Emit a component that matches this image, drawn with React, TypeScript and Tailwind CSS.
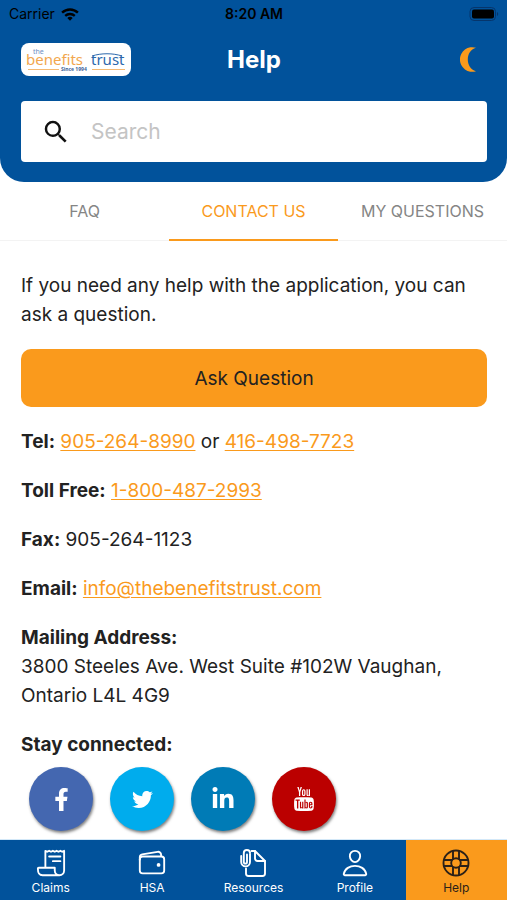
import type { ReactNode } from "react";
import { FaFacebookF, FaLinkedinIn, FaTwitter } from "react-icons/fa";
import { IoPersonOutline, IoReceiptOutline, IoWalletOutline } from "react-icons/io5";
import { MdSearch } from "react-icons/md";
import { TfiYoutube } from "react-icons/tfi";

function WifiIcon() {
  return (
    <svg viewBox="0 0 18 13" className="h-[13px] w-[18px]" aria-hidden="true">
      <path d="M9 12.8 6.3 10a4 4 0 0 1 5.4 0z" fill="currentColor" />
      <path d="M4.2 7.9a7 7 0 0 1 9.6 0" fill="none" stroke="currentColor" strokeWidth="2.3" />
      <path d="M1.1 4.7a11.3 11.3 0 0 1 15.8 0" fill="none" stroke="currentColor" strokeWidth="2.4" />
    </svg>
  );
}

function BatteryIcon() {
  return (
    <svg viewBox="0 0 30 14" className="h-[14px] w-[30px]" aria-hidden="true">
      <rect x="1" y="0.5" width="25.5" height="13" rx="4" fill="none" stroke="#06356b" />
      <rect x="3" y="2.5" width="22" height="9" rx="2" fill="#000" />
      <path d="M28 5c1.6.6 1.6 3.4 0 4z" fill="#06356b" />
    </svg>
  );
}

function MoonIcon() {
  return (
    <svg viewBox="0 0 16 25" className="h-[25px] w-4" fill="currentColor" aria-hidden="true">
      <path d="M16 0.800A12.300 12.300 0 1 0 16 24.200C10.500 22.500 7.800 17.800 7.800 12.500S10.500 2.500 16 0.800z" />
    </svg>
  );
}

function ResourcesIcon() {
  return (
    <svg
      viewBox="0 0 30 30"
      className="size-[30px]"
      fill="none"
      stroke="currentColor"
      strokeWidth="1.900"
      strokeLinecap="round"
      strokeLinejoin="round"
      aria-hidden="true"
    >
      <path d="M13.500 3H17l10 10v12.500a2.500 2.500 0 0 1-2.500 2.500H10.500A2.500 2.500 0 0 1 8 25.500v-5" />
      <path d="M17 3v7.500a2.500 2.500 0 0 0 2.500 2.500H27" />
      <path d="M12 6v8a4.400 4.400 0 0 1-8.800 0M3.200 14V8M5.800 12V5.100a3.100 3.100 0 0 1 6.200 0M5.800 12v2a1.600 1.600 0 0 0 3.200 0V6.500" />
    </svg>
  );
}

function LifebuoyIcon() {
  return (
    <svg viewBox="0 0 30 30" className="size-[30px]" fill="none" stroke="currentColor" strokeWidth="1.900" aria-hidden="true">
      <circle cx="15" cy="15" r="12.500" />
      <circle cx="15" cy="15" r="4.800" />
      <path d="M12 2.800v8.400M18 2.800v8.400M12 18.800v8.400M18 18.800v8.400M2.800 12h8.400M2.800 18h8.400M18.800 12h8.400M18.800 18h8.400" />
    </svg>
  );
}

function Logo() {
  return (
    <svg viewBox="0 0 110 33" className="h-[33px] w-[110px] rounded-lg bg-white" role="img" aria-label="the benefits trust, since 1994">
      <g fontFamily="'Noto Sans', sans-serif">
        <text x="12" y="11" fontSize="7" fill="#6d8fc4">the</text>
        <text x="5" y="22" fontSize="15" fill="#f2a74e">benefits</text>
        <text x="70" y="22" fontSize="15" fill="#2d69ad">trust</text>
        <text x="40" y="28" fontSize="5" fontWeight="700" fill="#3b5f9b">Since 1994</text>
      </g>
      <path d="M71 13c9-3 21-3 30 0" fill="none" stroke="#2d69ad" strokeWidth="1" />
      <path d="M7 26.500h31M71 26.500h33" stroke="#f5b971" strokeWidth="1" />
    </svg>
  );
}

const tabs = [
  { label: "FAQ", active: false },
  { label: "CONTACT US", active: true },
  { label: "MY QUESTIONS", active: false },
];

const socials = [
  { label: "Facebook", color: "bg-[#4467b0]", icon: <FaFacebookF size={23} /> },
  { label: "Twitter", color: "bg-[#00aced]", icon: <FaTwitter size={21} /> },
  { label: "LinkedIn", color: "bg-[#007bb6]", icon: <FaLinkedinIn size={24} /> },
  { label: "YouTube", color: "bg-[#bb0000]", icon: <TfiYoutube size={24} /> },
];

const navItems = [
  { label: "Claims", icon: <IoReceiptOutline size={30} />, active: false },
  { label: "HSA", icon: <IoWalletOutline size={30} />, active: false },
  { label: "Resources", icon: <ResourcesIcon />, active: false },
  { label: "Profile", icon: <IoPersonOutline size={30} />, active: false },
  { label: "Help", icon: <LifebuoyIcon />, active: true },
];

function ContactLink({ href, children }: { href: string; children: ReactNode }) {
  return (
    <a href={href} className="text-[#fa9a1c] underline decoration-1 underline-offset-2">
      {children}
    </a>
  );
}

export default function App() {
  return (
    <div className="flex min-h-screen flex-col bg-white font-['Inter',sans-serif] text-[#222]">
      <header className="rounded-b-3xl bg-[#01529b] pb-5">
        <div className="grid h-7 grid-cols-3 items-center pr-2 pl-[9px] text-sm text-black">
          <div className="flex items-center gap-[6px]">
            <span>Carrier</span>
            <WifiIcon />
          </div>
          <span className="text-center font-semibold">8:20 AM</span>
          <div className="flex justify-end">
            <BatteryIcon />
          </div>
        </div>
        <div className="grid h-[63px] grid-cols-3 items-center pr-5 pl-[21px]">
          <Logo />
          <h1 className="text-center text-2xl font-bold text-white">Help</h1>
          <button type="button" aria-label="Dark mode" className="justify-self-end pr-[11px] text-[#fa9a1c]">
            <MoonIcon />
          </button>
        </div>
        <div className="pt-[10px] pr-5 pl-[21px]">
          <label className="flex h-[61px] items-center gap-5 rounded-[4px] bg-white pl-5 text-[#111]">
            <MdSearch size={30} />
            <input
              type="search"
              aria-label="Search"
              placeholder="Search"
              className="min-w-0 flex-1 text-[21px] outline-none placeholder:text-[#c4c4c4]"
            />
          </label>
        </div>
      </header>

      <div role="tablist" className="grid grid-cols-3">
        {tabs.map((tab) => (
          <button
            key={tab.label}
            type="button"
            role="tab"
            aria-selected={tab.active}
            className={
              tab.active
                ? "h-[59px] border-b-2 border-[#fa9a1c] text-base text-[#fa9a1c]"
                : "h-[59px] border-b border-[#f3f3f3] text-base text-[#858585]"
            }
          >
            {tab.label}
          </button>
        ))}
      </div>

      <main className="flex flex-1 flex-col gap-5 pt-[30px] pr-5 pl-[21px] text-[19px] leading-[29px]">
        <p>If you need any help with the application, you can ask a question.</p>
        <button type="button" className="h-[58px] w-full rounded-[10px] bg-[#fa9a1c]">
          Ask Question
        </button>
        <p>
          <b>Tel:</b> <ContactLink href="tel:905-264-8990">905-264-8990</ContactLink> or{" "}
          <ContactLink href="tel:416-498-7723">416-498-7723</ContactLink>
        </p>
        <p>
          <b>Toll Free:</b> <ContactLink href="tel:1-800-487-2993">1-800-487-2993</ContactLink>
        </p>
        <p>
          <b>Fax:</b> 905-264-1123
        </p>
        <p>
          <b>Email:</b>{" "}
          <ContactLink href="mailto:info@thebenefitstrust.com">info@thebenefitstrust.com</ContactLink>
        </p>
        <p>
          <b>Mailing Address:</b>
          <br />
          3800 Steeles Ave. West Suite #102W Vaughan, Ontario L4L 4G9
        </p>
        <section>
          <h2 className="font-bold">Stay connected:</h2>
          <div className="flex gap-[17px] px-2 py-2">
            {socials.map((social) => (
              <a
                key={social.label}
                href="#"
                aria-label={social.label}
                className={`flex size-16 items-center justify-center rounded-full text-white shadow-[1px_2px_3px_rgba(0,0,0,0.5)] ${social.color}`}
              >
                {social.icon}
              </a>
            ))}
          </div>
        </section>
      </main>

      <nav className="sticky bottom-0 grid grid-cols-5 border-t border-[#d3e8f8] bg-[#01529b]">
        {navItems.map((item) => (
          <a
            key={item.label}
            href="#"
            className={`flex h-[60px] flex-col items-center pt-2 text-xs ${
              item.active ? "bg-[#fa9a1c] text-[#2b2118]" : "text-white"
            }`}
          >
            {item.icon}
            <span className="leading-5">{item.label}</span>
          </a>
        ))}
      </nav>
    </div>
  );
}
